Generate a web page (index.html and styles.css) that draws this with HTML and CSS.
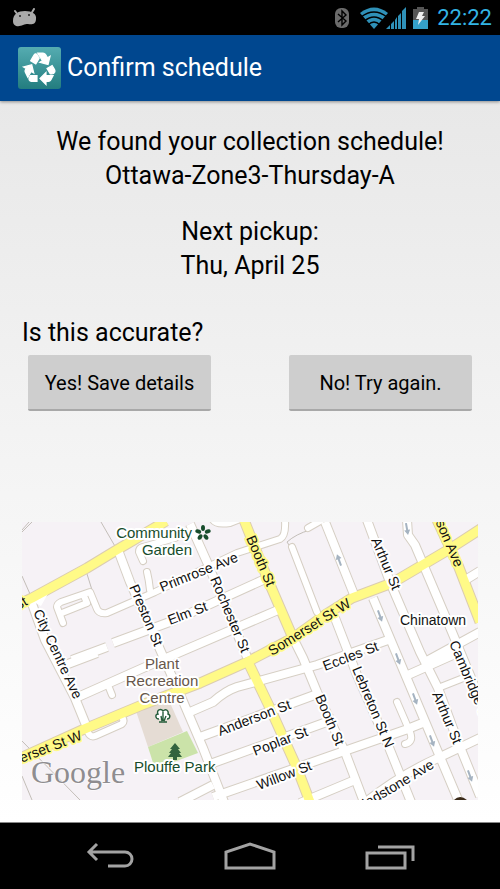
FILE: index.html
```html
<!DOCTYPE html>
<html lang="en">
<head>
<meta charset="utf-8">
<meta name="viewport" content="width=device-width, initial-scale=1">
<title>Confirm schedule</title>
<link rel="stylesheet" href="styles.css">
</head>
<body>
<div class="status">
  <svg class="droid" width="26" height="20" viewBox="0 0 26 20" aria-hidden="true">
    <path d="M3 3l3 4M22 1l-3 5" stroke="#aaa" stroke-width="2" stroke-linecap="round"/>
    <path d="M1 13C1 6 6 3 13 3s12 3 11 8c0 5-4 6-8 5-2 0-3 0-5 1-4 2-10 2-10-4z" fill="#aaa"/>
    <circle cx="8" cy="8" r="1" fill="#222"/><circle cx="17" cy="7" r="1" fill="#222"/>
  </svg>
  <div class="status-right">
    <svg width="16" height="22" viewBox="0 0 16 22" aria-hidden="true">
      <rect x="1" y="1" width="14" height="20" rx="6" fill="#6b6b6b"/>
      <path d="M4 7l8 7-4 4V4l4 4-8 7" fill="none" stroke="#000" stroke-width="1.4"/>
    </svg>
    <svg class="wifi" width="28" height="22" viewBox="0 0 28 22" aria-hidden="true">
      <path d="M0 6Q14-5 28 6L14 22z" fill="#2f91b8"/>
      <path d="M1 10Q14 0 27 10M4.500 14Q14 6 23.500 14M8 18Q14 12 20 18" fill="none" stroke="#000" stroke-width="1.300"/>
    </svg>
    <svg width="20" height="22" viewBox="0 0 20 22" aria-hidden="true">
      <path d="M0 22L4 18v4zM5 17l3-3v8H5zM9 13l2-3v12H9zM12 9l3-3v16h-3zM16 4l4-4v22h-4z" fill="#2f91b8"/>
    </svg>
    <svg class="battery" width="15" height="22" viewBox="0 0 15 22" aria-hidden="true">
      <path d="M4 0h7v2h4v11H0V2h4z" fill="#555"/>
      <path d="M0 13h15v9H0z" fill="#35a0c8"/>
      <path d="M6 5h5l-2 4h3l-7 9 1-6H3z" fill="#eee"/>
    </svg>
    <time class="clock">22:22</time>
  </div>
</div>

<header class="bar">
  <svg class="logo" width="43" height="42" viewBox="0 0 43 42" aria-hidden="true">
    <defs><linearGradient id="teal" x2="0" y2="1"><stop stop-color="#55acb1"/><stop offset="1" stop-color="#237d7f"/></linearGradient></defs>
    <rect width="43" height="42" rx="3" fill="url(#teal)"/>
    <path transform="translate(4 3) scale(1.500)" fill="#fff" stroke="#fff" stroke-width=".8" d="M5.770 7.150L7.200 4.780l1.030-1.710c.390-.650 1.330-.650 1.720 0l1.480 2.460-1.230 2.060-1 1.620zM21.720 12.970l-1.600-2.660-3.460 2L18.870 16H20c.760 0 1.450-.430 1.790-1.110.280-.600.280-1.300-.070-1.920zM16 21h1.500c.760 0 1.450-.430 1.790-1.110L20.740 17H16v-2l-4 4 4 4zM10 17H5.700l-.840 1.410c-.300.500-.320 1.120-.060 1.650.280.570.870.940 1.520.940H10zM6.120 14.350l1.730 1.040L6.480 9.900 1 11.270l1.700 1.020-.410.690c-.350.590-.380 1.310-.070 1.920l1.630 3.260zM17.020 5.140l-1.300-2.170C15.350 2.370 14.700 2 14 2h-3.530l3.120 5.200-1.720 1.030 5.490 1.370 1.370-5.490z"/>
  </svg>
  <h1>Confirm schedule</h1>
</header>

<main>
  <p class="found">We found your collection schedule!<br>Ottawa-Zone3-Thursday-A</p>
  <p class="found">Next pickup:<br>Thu, April 25</p>
  <p class="question">Is this accurate?</p>
  <div class="choices">
    <button type="button">Yes! Save details</button>
    <button type="button">No! Try again.</button>
  </div>

  <svg class="map" viewBox="22 522 456 278" role="img" aria-label="Map of the collection zone">
    <defs>
      <g id="streets">
        <path d="M118 550L130 582 158 645 182 699 203 748 224 802"/>
        <path d="M30 598L45 640 75 698 88 730"/>
        <path d="M72 660L107 647M113 643L175 620 263 580"/>
        <path d="M60 667L97 653M78 697L143 668 278 610"/>
        <path d="M190 524L207 562 247 657"/>
        <path d="M190 712L213 702Q225 691 237 687L317 665 388 640"/>
        <path d="M200 737L320 693M213 763L335 719M213 797L330 756 405 730 425 722"/>
        <path d="M293 638L303 658 317 692 345 752 364 802"/>
        <path d="M335 618L357 675 388 745 411 802"/>
        <path d="M325 522L355 597M373 598L397 655 432 738 459 802"/>
        <path d="M367 520L390 582 420 652 438 688 458 742 480 796"/>
        <path d="M407 520L408 535 415 545 452 632 482 704"/>
        <path d="M467 579L480 571M425 662L480 632M408 675L455 654"/>
        <path d="M366 802Q400 775 438 758L480 738M300 803L355 780"/>
        <path d="M180 802L213 785"/>
      </g>
      <g id="lanes">
        <path d="M63 623L57 607Q57 604 61 602L90 592 97 609Q99 614 107 613L155 592 237 553 280 539Q286 536 285 520"/>
        <path d="M62 613L87 603 84 596M143 561L139 552Q139 548 143 547L175 538M147 572Q149 580 150 590"/>
        <path d="M108 685L112 695M87 729Q89 738 95 736L122 724Q125 721 122 717"/>
        <path d="M292 547L317 612M397 702L410 732Q414 742 405 744M438 688L466 677M308 528L322 520M213 520Q216 525 230 523L240 519"/>
      </g>
      <g id="main-roads">
        <path d="M18 605L32 598 87 568 115 551 166 521"/>
        <path d="M18 759L82 730 142 705 200 683 247 662 270 650 293 638 325 615 352 598 392 583 448 550 482 528"/>
        <path d="M244 520L268 580 293 638M248 662L270 708 297 768 310 802M437 520L458 565 480 622"/>
      </g>
      <path id="arrow" d="M-1-6h2v7h2L0 6l-3-5h2z"/>
    </defs>
    <rect x="22" y="522" width="456" height="278" fill="#f6f2f6"/>
    <g class="rail"><path d="M22 532L32 522M22 530L29 522M101 522L116 548M22 576L30 594M87 574L92 590M22 741L80 800M22 776L32 800M40 592Q65 573 94 560M287 542Q296 534 310 530M287 542L293 551"/></g>
    <path d="M136 711L167 696 183 732 148 747z" fill="#e5dcd4"/>
    <path d="M148 747L187 731 198 753 155 769z" fill="#cbe3a9"/>
    <use href="#streets" class="street-edge"/><use href="#lanes" class="lane-edge"/>
    <use href="#main-roads" class="main-edge"/>
    <use href="#streets" class="street"/><use href="#lanes" class="lane"/>
    <path d="M30 600L50 590 41 606z" fill="#fff"/>
    <use href="#main-roads" class="main-road"/>
    <path d="M106 555L120 543 135 541 111 557z" fill="#fffa87"/>
    <g fill="#a5b3c1">
      <use href="#arrow" transform="translate(339 560) rotate(160)"/>
      <use href="#arrow" transform="translate(380 616) rotate(-20)"/>
      <use href="#arrow" transform="translate(398 659) rotate(-20)"/>
      <use href="#arrow" transform="translate(415 699) rotate(-20)"/>
      <use href="#arrow" transform="translate(432 741) rotate(-20)"/>
      <use href="#arrow" transform="translate(407 529) rotate(-10)"/>
      <use href="#arrow" transform="translate(470 776) rotate(-20)"/>
    </g>
    <g class="label">
      <text transform="translate(162 592) rotate(-22)">Primrose Ave</text>
      <text transform="translate(170 625) rotate(-21)">Elm St</text>
      <text transform="translate(129 587) rotate(67)">Preston St</text>
      <text transform="translate(210 579) rotate(67)">Rochester St</text>
      <text transform="translate(33 612) rotate(65)">City Centre Ave</text>
      <text transform="translate(371 540) rotate(67)">Arthur St</text>
      <text transform="translate(325 671) rotate(-21)">Eccles St</text>
      <text transform="translate(220 736) rotate(-21)">Anderson St</text>
      <text transform="translate(255 756) rotate(-21)">Poplar St</text>
      <text transform="translate(259 790) rotate(-21)">Willow St</text>
      <text transform="translate(315 697) rotate(67)">Booth St</text>
      <text transform="translate(352 669) rotate(67)">Lebreton St N</text>
      <text transform="translate(432 694) rotate(67)">Arthur St</text>
      <text transform="translate(449 643) rotate(67)">Cambridge St</text>
      <text transform="translate(357 814) rotate(-31)">Gladstone Ave</text>
      <text x="400" y="625">Chinatown</text>
    </g>
    <g class="label on-main">
      <text transform="translate(246 538) rotate(67)">Booth St</text>
      <text transform="translate(272 656) rotate(-32)">Somerset St W</text>
      <text transform="translate(-5 773) rotate(-21)">Somerset St W</text>
      <text transform="translate(424 495) rotate(67)">Bronson Ave</text>
      <text transform="translate(17 611) rotate(-30)">St</text>
    </g>
    <g class="label place park-name">
      <text x="192" y="538" text-anchor="end">Community</text>
      <text x="192" y="555" text-anchor="end">Garden</text>
      <text x="134" y="772">Plouffe Park</text>
    </g>
    <g class="label place centre-name" text-anchor="middle">
      <text x="162" y="669">Plant</text>
      <text x="162" y="686">Recreation</text>
      <text x="162" y="703">Centre</text>
    </g>
    <g fill="#174d2c">
      <ellipse cx="203" cy="528" rx="2" ry="3"/><ellipse cx="203" cy="528" rx="2" ry="3" transform="rotate(72 203 533)"/><ellipse cx="203" cy="528" rx="2" ry="3" transform="rotate(144 203 533)"/><ellipse cx="203" cy="528" rx="2" ry="3" transform="rotate(216 203 533)"/><ellipse cx="203" cy="528" rx="2" ry="3" transform="rotate(288 203 533)"/>
      <path d="M175 743l5 6h-2l3 4h-2l3 4h-5v3h-4v-3h-5l3-4h-2l3-4h-2z" opacity=".85"/>
    </g>
    <path d="M159 719c-4 0-4-5-1-5-2-4 3-6 5-3 3-3 6 0 5 3 3 1 2 5-1 5m-6-3l1 5m4-5l-2 5m-1 0v-9m-4 10h8" fill="#fff" stroke="#245c3a" stroke-width="1.400"/>
    <path d="M453 801q7-8 15 0z" fill="#3b2b1a"/>
    <text class="attribution" x="31" y="783">Google</text>
  </svg>
</main>

<nav class="system" aria-label="System">
  <button type="button" aria-label="Back"><svg width="48" height="28" viewBox="0 0 48 28"><path d="M11 2L3 10l8 8M3 10h36a7 7 0 0 1 0 14H22"/></svg></button>
  <button type="button" aria-label="Home"><svg width="52" height="28" viewBox="0 0 52 28"><path d="M2 26V10L26 2l24 8v16z"/></svg></button>
  <button type="button" aria-label="Recent apps"><svg width="50" height="28" viewBox="0 0 50 28"><path d="M2 11h38v15H2zM13 5h35v14"/></svg></button>
</nav>
</body>
</html>
```
FILE: styles.css
```css
* { box-sizing: border-box; }
body {
  margin: 0;
  min-height: 100vh;
  display: flex;
  flex-direction: column;
  font-family: Roboto, sans-serif;
  color: #000;
}
svg { display: block; }
.status {
  display: flex;
  align-items: center;
  justify-content: space-between;
  height: 35px;
  padding: 0 8px 0 12px;
  background: #000;
}
.status-right { display: flex; align-items: center; }
.wifi { margin-left: 10px; margin-right: -2px; }
.battery { margin-left: 7px; }
.clock {
  margin-left: 9px;
  font-size: 22px;
  line-height: 34px;
  color: #33b5e5;
}
.bar {
  position: relative;
  display: flex;
  align-items: center;
  gap: 6px;
  height: 66px;
  padding: 0 18px;
  background: #00478f;
  box-shadow: 0 1px 3px rgba(0, 0, 0, 0.4);
  color: #fff;
}
h1 { margin: 0; font-size: 25px; line-height: 34px; font-weight: 400; }
main {
  flex: 1;
  display: flex;
  flex-direction: column;
  padding: 24px 22px 22px;
  background: linear-gradient(#e8e8e8, #f4f4f4 50%, #fff);
}
p { margin: 0; font-size: 25px; line-height: 34px; }
.found { margin-bottom: 22px; text-align: center; }
.question { margin-top: 11px; }
.choices {
  display: grid;
  grid-template-columns: 1fr 1fr;
  gap: 78px;
  margin: 5px 6px 24px;
}
.choices button {
  height: 56px;
  padding: 2px 0 0;
  border: 0;
  border-radius: 2px;
  border-bottom: 2px solid #a8a8a8;
  background: #cecece;
  font: 20px Roboto, sans-serif;
  color: #000;
}
.map { width: 100%; height: auto; margin-top: auto; }
.rail { fill: none; stroke: #c3beb8; stroke-width: 1; }
.street-edge, .lane-edge, .main-edge { fill: none; stroke: #d6cfc4; stroke-linejoin: round; }
.street-edge { stroke-width: 10px; }
.lane-edge { stroke-width: 8px; stroke-linecap: round; }
.main-edge { stroke-width: 11px; stroke: #dccdb0; }
.street, .lane, .main-road { fill: none; stroke: #fff; stroke-linejoin: round; }
.street { stroke-width: 8px; }
.lane { stroke-width: 6px; stroke-linecap: round; }
.main-road { stroke-width: 9px; stroke: #fffa87; }
.label {
  font-family: "Liberation Sans", sans-serif;
  font-size: 14px;
  fill: #111;
  stroke: #fff;
  stroke-width: 4px;
  stroke-linejoin: round;
  paint-order: stroke;
}
.on-main { stroke: #fffa87; }
.place { font-size: 15px; }
.park-name { fill: #174d2c; }
.centre-name { fill: #66564a; }
.attribution {
  font-family: "Liberation Serif", serif;
  font-size: 32px;
  fill: #8f8d90;
  stroke: #fff;
  stroke-width: 1px;
  paint-order: stroke;
}
.system {
  display: flex;
  justify-content: center;
  gap: 88px;
  height: 67px;
  border-top: 1px solid #888;
  background: #000;
}
.system button {
  display: flex;
  align-items: center;
  justify-content: center;
  width: 52px;
  padding: 0;
  border: 0;
  background: none;
}
.system path { fill: none; stroke: #a3a3a3; stroke-width: 3px; }
```
